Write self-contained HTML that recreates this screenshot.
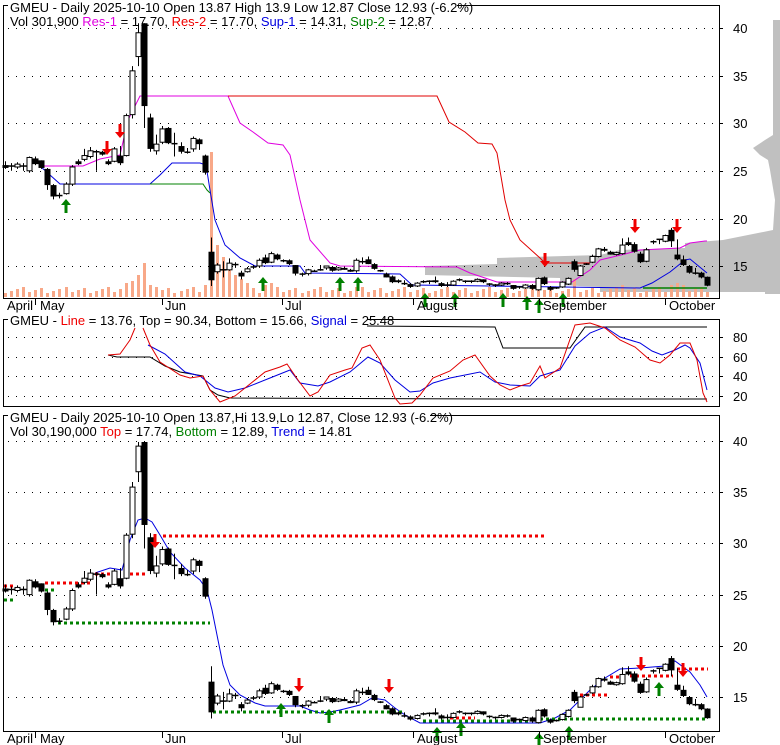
<!DOCTYPE html>
<html><head><meta charset="utf-8"><style>
html,body{margin:0;padding:0;background:#fff;}
svg{display:block;font-family:"Liberation Sans",Arial,sans-serif;}
</style></head><body>
<svg id="s" width="780" height="745" viewBox="0 0 780 745" xmlns="http://www.w3.org/2000/svg">
<rect width="780" height="745" fill="#fff"/>
<polygon fill="#c0c0c0" points="773,20 773,135 765,140 753,148 760,155 768,160 770,170 775,200 773,230 723,240 685,243 685,248 620,250 600,255 497,258 497,264 425,266 425,275 560,278 560,285 600,287 600,292 765,292 765,294 780,294 780,20"/>
<g id="grid" stroke="#000" stroke-dasharray="1 7" stroke-width="1"></g>
<g id="vol"></g>
<polyline fill="none" stroke="#e000e0" stroke-width="1" points="40,166 83,166 100,159 120,155 128,120 140,96 228,96 240,123 253,132 268,143 283,145 290,155 300,200 310,240 330,263 340,266 457,267 470,273 497,282 572,282 590,270 600,260 625,254 640,250 680,248 690,243 705,241 707,241"/>
<polyline fill="none" stroke="#e00000" stroke-width="1" points="228,96 437,96 449,122 465,132 478,143 492,144 497,153 505,200 510,220 520,240 540,258 545,263 590,263"/>
<polyline fill="none" stroke="#0000e0" stroke-width="1" points="40,166 60,184 150,184 160,175 172,163 200,163 206,165 210,190 215,220 225,245 240,258 255,266 300,266 305,273 400,274 412,285 640,288 652,283 670,272 685,260 690,259 707,273"/>
<polyline fill="none" stroke="#008000" stroke-width="1" points="150,184 203,184 207,190 210,193"/>
<polyline fill="none" stroke="#008000" stroke-width="1.5" points="643,288 707,288"/>
<polyline fill="none" stroke="#0000e0" stroke-width="1" points="95,573 110,568 122,570 130,540 138,520 145,518 152,522 160,535 170,552 185,568 200,580 207,590 212,610 218,640 223,665 230,685 240,695 255,703 265,706 300,706 310,710 320,713 330,712 340,710 360,705 372,698 385,700 395,708 405,715 420,723 540,723 555,718 570,710 590,690 605,678 620,669 640,668 665,666 675,661 690,672 700,685 707,697"/>
<g fill="none" stroke-width="3" stroke-dasharray="3 3">
<line x1="163" y1="536" x2="547" y2="536" stroke="#f00000"/>
<line x1="130" y1="574" x2="147" y2="574" stroke="#f00000"/>
<line x1="95" y1="574" x2="115" y2="574" stroke="#f00000"/>
<line x1="45" y1="583" x2="92" y2="583" stroke="#f00000"/>
<line x1="4" y1="586" x2="13" y2="586" stroke="#f00000"/>
<line x1="45" y1="590" x2="55" y2="590" stroke="#008000"/>
<line x1="4" y1="600" x2="13" y2="600" stroke="#008000"/>
<line x1="58" y1="623" x2="210" y2="623" stroke="#008000"/>
<line x1="213" y1="712" x2="403" y2="712" stroke="#008000"/>
<line x1="423" y1="721" x2="530" y2="721" stroke="#008000"/>
<line x1="450" y1="718" x2="475" y2="718" stroke="#f00000"/>
<line x1="540" y1="719" x2="707" y2="719" stroke="#008000"/>
<line x1="580" y1="695" x2="607" y2="695" stroke="#f00000"/>
<line x1="610" y1="677" x2="625" y2="677" stroke="#f00000"/>
<line x1="630" y1="676" x2="673" y2="676" stroke="#f00000"/>
<line x1="677" y1="669" x2="708" y2="669" stroke="#f00000"/>
</g>
<polyline fill="none" stroke="#000" stroke-width="1" points="108,355 117,357 150,357 165,366 180,372 203,376 210,390 218,395 230,398 495,399 707,399"/>
<polyline fill="none" stroke="#000" stroke-width="1" points="367,326 495,327 503,348 570,348 585,327 707,327"/>
<polyline fill="none" stroke="#0000e0" stroke-width="1" points="148,345 165,354 185,372 200,376 215,388 228,392 245,388 270,378 290,370 300,383 318,386 330,382 350,372 368,357 380,363 395,380 410,392 420,391 433,383 450,378 480,372 495,382 510,385 530,386 540,376 560,370 575,346 590,333 605,327 620,337 640,343 652,351 662,355 675,350 685,345 690,348 700,363 707,390"/>
<polyline fill="none" stroke="#e00000" stroke-width="1" points="108,355 120,354 130,340 135,328"/>
<polyline fill="none" stroke="#e00000" stroke-width="1" points="143,328 150,345 160,362 180,375 190,378 203,376 210,390 220,402 235,396 245,388 265,372 280,367 287,364 298,380 310,396 318,392 330,375 345,370 352,368 362,348 370,345 380,360 395,398 400,404 412,403 420,395 433,378 450,371 463,360 475,355 490,376 500,385 510,390 520,386 530,383 540,366 545,378 560,368 575,325 590,323 605,328 620,340 635,347 650,360 660,363 670,355 680,343 690,343 697,360 703,393 707,402"/>
<g id="c"></g>
<g id="arr"></g>
<g fill="none" stroke="#000" stroke-width="1">
<rect x="3.5" y="5.5" width="716" height="293"/>
<rect x="3.5" y="319.5" width="716" height="87"/>
<rect x="3.5" y="415.5" width="716" height="316"/>
</g>
<g fill="#fff"><rect x="8" y="0" width="449" height="12"/><rect x="8" y="314" width="359" height="10"/><rect x="8" y="410" width="422" height="10"/></g>
<g font-size="13" fill="#000">
<text x="10" y="12">GMEU - Daily 2025-10-10 Open 13.87  High 13.9  Low 12.87  Close 12.93 (-6.2%)</text>
<text x="10" y="26">Vol 301,900 <tspan fill="#e000e0">Res-1</tspan> = 17.70, <tspan fill="#f00000">Res-2</tspan> = 17.70, <tspan fill="#0000e0">Sup-1</tspan> = 14.31, <tspan fill="#008000">Sup-2</tspan> = 12.87</text>
<text x="10" y="325">GMEU - <tspan fill="#f00000">Line</tspan> = 13.76, Top = 90.34, Bottom = 15.66, <tspan fill="#0000e0">Signal</tspan> = 25.48</text>
<text x="10" y="422">GMEU - Daily 2025-10-10 Open 13.87,Hi 13.9,Lo 12.87, Close 12.93 (-6.2%)</text>
<text x="10" y="436">Vol 30,190,000 <tspan fill="#f00000">Top</tspan> = 17.74, <tspan fill="#008000">Bottom</tspan> = 12.89, <tspan fill="#0000e0">Trend</tspan> = 14.81</text>
</g>
<g font-size="13" fill="#000">
<text x="7" y="310">April</text><text x="40" y="310">May</text><text x="165" y="310">Jun</text><text x="285" y="310">Jul</text><text x="417" y="310">August</text><text x="543" y="310">September</text><text x="669" y="310">October</text>
<text x="7" y="743">April</text><text x="40" y="743">May</text><text x="165" y="743">Jun</text><text x="285" y="743">Jul</text><text x="417" y="743">August</text><text x="543" y="743">September</text><text x="669" y="743">October</text>
</g>
<g stroke="#000"><line x1="35.5" y1="298" x2="35.5" y2="305"/><line x1="162.5" y1="298" x2="162.5" y2="305"/><line x1="282.5" y1="298" x2="282.5" y2="305"/><line x1="413.5" y1="298" x2="413.5" y2="305"/><line x1="539.5" y1="298" x2="539.5" y2="305"/><line x1="665.5" y1="298" x2="665.5" y2="305"/>
<line x1="35.5" y1="731" x2="35.5" y2="738"/><line x1="162.5" y1="731" x2="162.5" y2="738"/><line x1="282.5" y1="731" x2="282.5" y2="738"/><line x1="413.5" y1="731" x2="413.5" y2="738"/><line x1="539.5" y1="731" x2="539.5" y2="738"/><line x1="665.5" y1="731" x2="665.5" y2="738"/></g>
<g font-size="13" fill="#000">
<text x="733" y="33">40</text><text x="733" y="81">35</text><text x="733" y="128">30</text><text x="733" y="176">25</text><text x="733" y="224">20</text><text x="733" y="271">15</text>
<text x="733" y="342">80</text><text x="733" y="362">60</text><text x="733" y="381">40</text><text x="733" y="401">20</text>
<text x="733" y="446">40</text><text x="733" y="497">35</text><text x="733" y="548">30</text><text x="733" y="600">25</text><text x="733" y="651">20</text><text x="733" y="702">15</text>
</g>
<g stroke="#000"><line x1="719" y1="28.5" x2="723" y2="28.5"/><line x1="719" y1="76.5" x2="723" y2="76.5"/><line x1="719" y1="123.5" x2="723" y2="123.5"/><line x1="719" y1="171.5" x2="723" y2="171.5"/><line x1="719" y1="219.5" x2="723" y2="219.5"/><line x1="719" y1="266.5" x2="723" y2="266.5"/>
<line x1="719" y1="337.5" x2="723" y2="337.5"/><line x1="719" y1="357.5" x2="723" y2="357.5"/><line x1="719" y1="376.5" x2="723" y2="376.5"/><line x1="719" y1="396.5" x2="723" y2="396.5"/>
<line x1="719" y1="441.5" x2="723" y2="441.5"/><line x1="719" y1="492.5" x2="723" y2="492.5"/><line x1="719" y1="543.5" x2="723" y2="543.5"/><line x1="719" y1="595.5" x2="723" y2="595.5"/><line x1="719" y1="646.5" x2="723" y2="646.5"/><line x1="719" y1="697.5" x2="723" y2="697.5"/></g>
</svg>
<script>
var NS="http://www.w3.org/2000/svg";
function el(p,t,a){var e=document.createElementNS(NS,t);for(var k in a)e.setAttribute(k,a[k]);p.appendChild(e);return e;}
var g=document.getElementById('grid');
[28,76,123,171,219,266,337,357,376,396,441,492,543,595,646,697].forEach(function(y){el(g,'line',{x1:8,x2:716,y1:y+.5,y2:y+.5});});
var D=[[25.6,26,25.2,25.3],[25.5,25.8,25,25.5],[25.4,25.9,25.2,25.7],[25.5,25.8,25,25.5],[25,26.5,24.8,26.4],[26.3,26.5,25.6,25.7],[26.1,26.1,25.2,25.3],[25.2,25.3,23,23.5],[23.5,23.6,22,22.3],[22.4,22.7,22.1,22.4],
[22.6,23.8,22.5,23.6],[23.6,25.6,23.4,25.4],[26,26.2,25.6,25.7],[26.2,27.3,26,26.6],[26.5,27.5,26.3,27.1],[27,27.2,25,27],[27,27.1,26.6,26.7],[26,26.2,25.6,25.7],[26,27.5,25.9,27.3],[26.6,27.6,25.6,25.8],
[26.6,31,26.5,30.8],[30.9,36,30.5,35.5],[37,40.5,36,39.5],[40.5,40.5,29.5,31.8],[30.6,31,27,27.3],[27.1,28.8,26.7,27.8],[28,29.7,27.8,29.4],[29.5,29.6,27.8,27.9],[27.9,29,26.5,27.8],[27.6,28,26.8,27],
[27,27.4,26.8,26.9],[27.3,28.6,27,28.4],[28.3,28.4,27.2,27.8],[26.6,26.7,24.6,24.8],[16.5,18,12.9,13.5],[14.4,15.3,14.2,15.1],[14.6,15.5,13.8,14.6],[14.6,15.8,14.5,15.3],[15.1,15.4,14.8,15.2],[14.3,14.5,13.6,13.9],
[14.4,14.9,14.3,14.7],[14.9,15.1,14.7,14.9],[15,15.8,14.8,15.6],[15.9,16.2,15.2,15.3],[15.4,16.5,15.3,16.3],[16.2,16.3,15.6,15.7],[15.6,15.7,15.4,15.5],[15.6,15.7,15.1,15.2],[15.1,15.1,14,14.2],[14.2,14.3,13.9,14.1],
[14.2,14.7,14,14.6],[14.5,14.6,14.4,14.4],[14.6,15.1,14.5,14.6],[14.8,15,14.6,15],[14.9,15,14.4,14.5],[14.6,14.9,14.5,14.8],[14.8,14.9,14.6,14.6],[14.6,14.7,14.4,14.4],[14.5,15.8,14.3,15.6],[15.5,15.9,15.2,15.4],
[15.7,16,15.2,15.2],[15.2,15.3,14.6,14.7],[14.5,14.6,14.4,14.5],[14.2,14.3,13.8,13.8],[13.9,14,13.2,13.3],[13.5,13.6,13.2,13.3],[13.2,13.5,13,13.1],[13.1,13.2,12.7,12.8],[12.9,13.3,12.8,13.2],[13.3,13.5,13.2,13.4],
[13.4,13.5,13.1,13.4],[13.5,13.9,13.2,13.3],[13.2,13.3,12.8,12.9],[13,13.3,12.8,13],[13,13.5,12.9,13.4],[13.5,13.7,13.4,13.6],[13.4,13.5,13.2,13.4],[13.4,13.5,13.2,13.4],[13.4,13.7,13.3,13.6],[13.6,13.6,13.2,13.3],
[13.1,13.2,12.9,13.1],[13,13.1,12.8,13],[13,13.3,12.9,13.2],[13.2,13.3,13,13.1],[13,13,12.5,12.6],[12.8,12.9,12.6,12.8],[12.7,13.1,12.6,13],[13,13.1,12.5,12.6],[12.5,13.8,12.4,13.7],[13.8,13.9,13,13.1],
[12.8,12.9,12.4,12.5],[12.7,12.8,12.6,12.7],[12.8,13.4,12.7,13.3],[13.1,13.8,13,13.7],[15.5,15.7,14.4,14.6],[14,15.1,14,15],[15.2,15.3,15.1,15.2],[15.4,16.2,15.3,16],[16,16.9,15.9,16.8],[16.8,17,16.5,16.6],
[16.5,16.6,16.2,16.2],[16.2,16.5,16.1,16.4],[16.3,17.9,16.2,17.2],[17.5,18,17.1,17.2],[17.3,17.5,16.4,16.5],[16.3,16.5,15.3,15.4],[15.5,16.9,15.4,16.7],[17.5,17.7,17.3,17.6],[17.8,17.8,17.3,17.8],[17.6,18.3,17.5,18.2],
[18.8,19,17,17.6],[16.2,17.8,15.6,15.7],[15.7,16.1,15,15.1],[15,15.1,14.2,14.3],[14.3,14.8,14.1,14.2],[14.3,14.4,13.7,13.8],[13.87,13.9,12.87,12.93]];
var N=D.length,sp=702/(N-1);
var c=document.getElementById('c'),v=document.getElementById('vol');
function y1(p){return Math.max(6,28+(40-p)*9.52);}
function y3(p){return Math.max(442,441+(40-p)*10.24);}
var VH={19:8,20:14,21:16,22:22,23:34,24:12,25:10,33:12,34:145,35:52,36:40,37:30,38:22,39:18,40:14,43:12,44:14,58:10,88:14,94:18,102:12,110:12,111:14,112:12};
for(var i=0;i<N;i++){
 var x=Math.round(5+i*sp)+.5,d=D[i];
 var h=VH[i]||(4+((i*37)%7));
 el(v,'rect',{x:x-1.5,y:297-h,width:3,height:h,fill:'#f8a888'});
 [[y1],[y3]].forEach(function(f){f=f[0];
  var o=f(d[0]),cl=f(d[3]),hi=f(d[1]),lo=f(d[2]);
  el(c,'line',{x1:x,x2:x,y1:hi,y2:lo,stroke:'#000'});
  var t=Math.min(o,cl),b=Math.max(o,cl);
  if(b-t<1.5){el(c,'line',{x1:x-3,x2:x+3,y1:(t+b)/2,y2:(t+b)/2,stroke:'#000','stroke-width':1.5});}
  else if(d[3]>d[0]){el(c,'rect',{x:x-2.5,y:t,width:5,height:b-t,fill:'#fff',stroke:'#000'});}
  else{el(c,'rect',{x:x-3,y:t,width:6,height:b-t,fill:'#000'});}
 });
}
var a=document.getElementById('arr');
function up(x,t){el(a,'polygon',{fill:'#008000',points:[x,t,x-5,t+6,x-1.5,t+6,x-1.5,t+14,x+1.5,t+14,x+1.5,t+6,x+5,t+6].join(' ')});}
function dn(x,t){el(a,'polygon',{fill:'#f00000',points:[x-1.5,t,x+1.5,t,x+1.5,t+8,x+5,t+8,x,t+14,x-5,t+8,x-1.5,t+8].join(' ')});}
[[66,199],[263,277],[340,277],[358,277],[425,293],[455,293],[503,293],[527,296],[539,299],[563,293]].forEach(function(p){up(p[0],p[1]);});
[[120,124],[107,141],[545,253],[635,219],[677,219]].forEach(function(p){dn(p[0],p[1]);});
[[281,703],[329,709],[437,727],[461,722],[539,733],[569,726],[659,682]].forEach(function(p){up(p[0],p[1]);});
[[155,534],[299,678],[389,679],[641,657],[683,663]].forEach(function(p){dn(p[0],p[1]);});
</script>
</body></html>
